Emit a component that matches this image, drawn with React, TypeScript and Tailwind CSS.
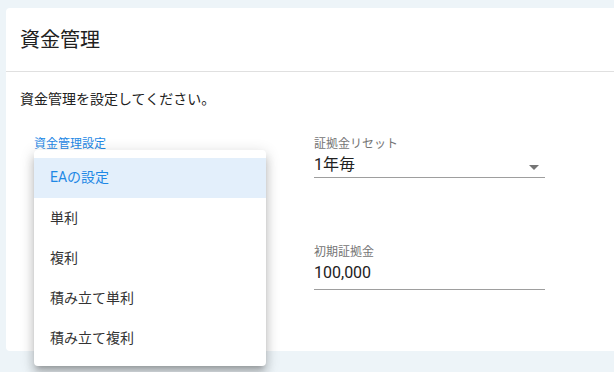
import { useState } from "react";

const options = ["EAの設定", "単利", "複利", "積み立て単利", "積み立て複利"];

function ArrowDrop() {
  return (
    <svg width="24" height="24" viewBox="0 0 24 24" className="text-[#757575]">
      <path d="M7 10l5 5 5-5z" fill="currentColor" />
    </svg>
  );
}

export default function App() {
  const [selected] = useState(0);

  return (
    <div
      className="h-[372px] w-[614px] overflow-hidden bg-[#edf4f8] pl-[6px] pt-[8px]"
      style={{ fontFamily: 'Roboto, "Noto Sans CJK JP", sans-serif' }}
    >
      <div className="relative h-[343px] w-[620px] rounded-[4px] bg-white">
        <div className="flex h-[64px] items-center border-b border-[#e0e0e0] px-[14px]">
          <h1 className="text-[20px] font-normal text-[#212121]">資金管理</h1>
        </div>

        <div className="px-[14px] pt-[17px]">
          <p className="text-[14px] leading-[20px] text-[#212121]">資金管理を設定してください。</p>

          <div className="mt-[27px] flex gap-[48px] pl-[14px]">
            {/* left column */}
            <div className="w-[232px]">
              <div className="text-[12px] leading-[16px] text-[#1e88e5]">資金管理設定</div>
              <div className="h-[26px] border-b border-[#9e9e9e]" />
            </div>

            {/* right column */}
            <div className="w-[231px]">
              <div className="text-[12px] leading-[16px] text-[#757575]">証拠金リセット</div>
              <div className="flex h-[26px] items-center justify-between border-b border-[#9e9e9e]">
                <span className="mt-[1px] text-[16px] leading-[24px] text-[#212121]">1年毎</span>
                <span className="-mr-[1px] mt-[4px]">
                  <ArrowDrop />
                </span>
              </div>

              <div className="mt-[66px] text-[12px] leading-[16px] text-[#757575]">初期証拠金</div>
              <div className="mt-[1px] border-b border-[#9e9e9e] pb-[4px] text-[16px] leading-[24px] text-[#212121]">
                100,000
              </div>
            </div>
          </div>
        </div>

        {/* open select menu */}
        <ul className="absolute left-[28px] top-[142px] z-10 w-[232px] rounded-[4px] bg-white py-2 shadow-[0_5px_5px_-3px_rgba(0,0,0,0.2),0_8px_10px_1px_rgba(0,0,0,0.14),0_3px_14px_2px_rgba(0,0,0,0.12)]">
          {options.map((o, i) => (
            <li
              key={o}
              className={
                i === selected
                  ? "flex h-10 items-center bg-[#e3effb] px-4 pb-[2px] text-[14px] text-[#1e88e5]"
                  : "flex h-10 items-center px-4 text-[14px] text-[#333333]"
              }
            >
              {o}
            </li>
          ))}
        </ul>
      </div>
    </div>
  );
}
